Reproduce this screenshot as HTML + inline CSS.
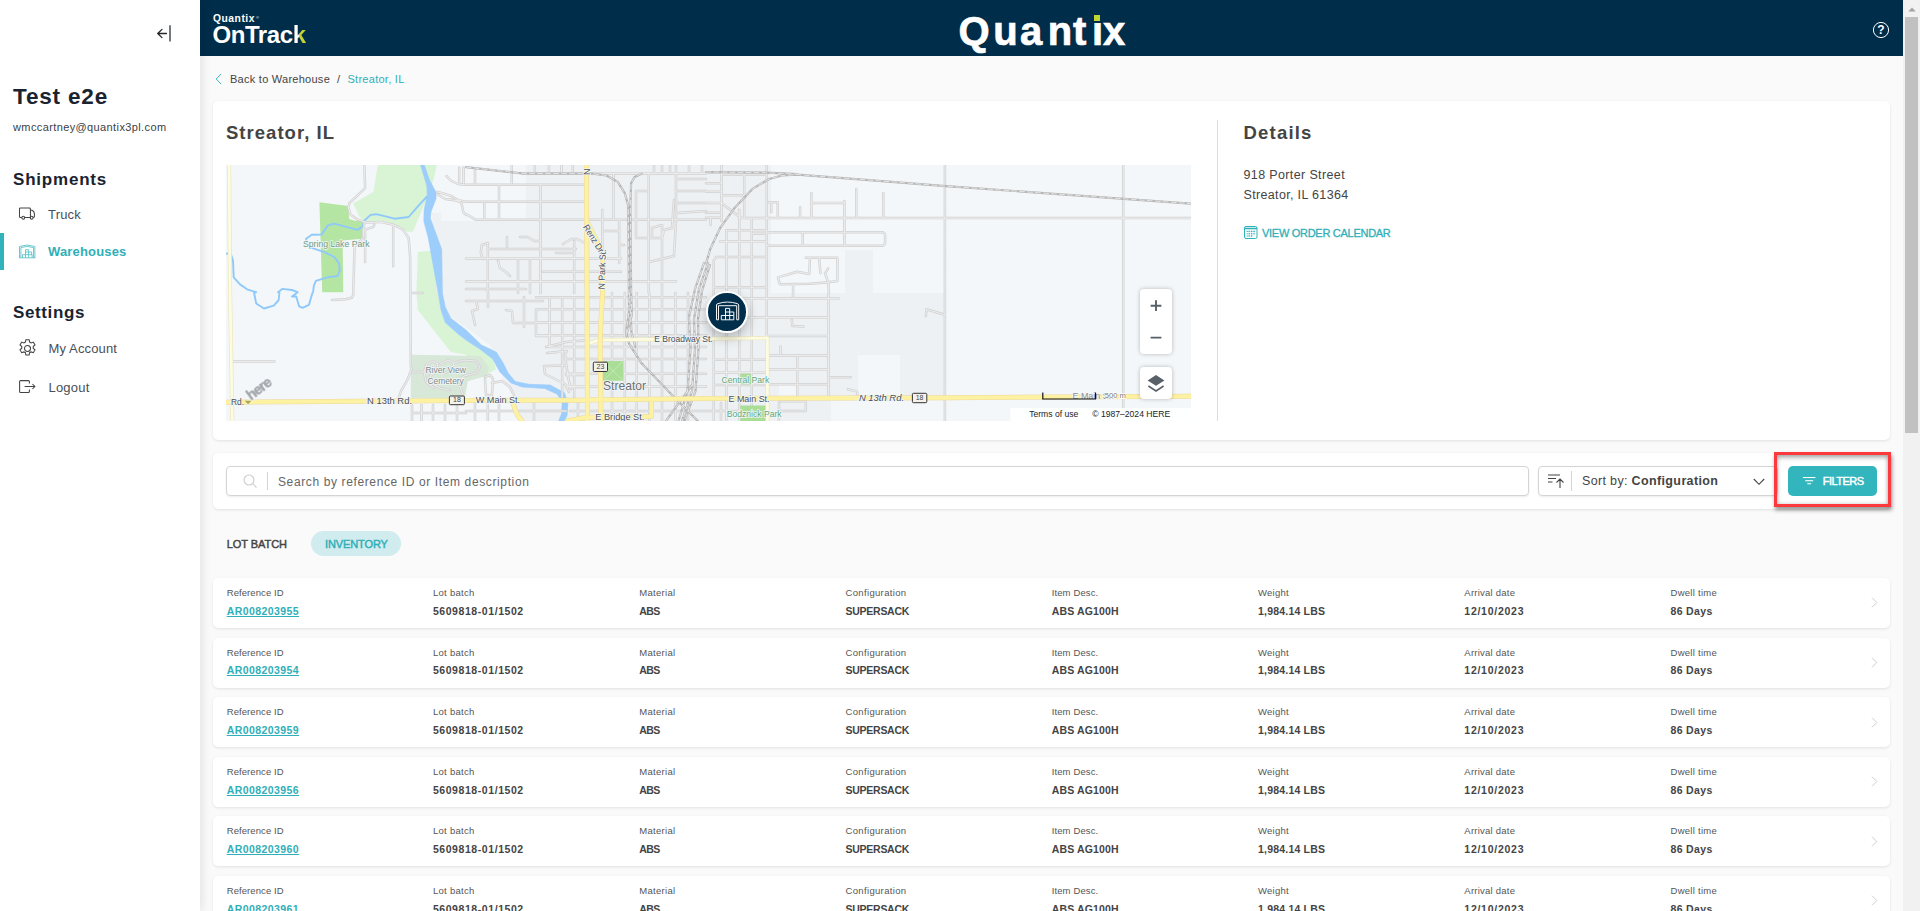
<!DOCTYPE html>
<html lang="en"><head><meta charset="utf-8"><title>Quantix OnTrack - Streator, IL</title>
<style>
*{box-sizing:border-box;margin:0;padding:0}
html,body{width:1920px;height:911px;overflow:hidden;background:#fafafa;font-family:"Liberation Sans",sans-serif;color:#444}
.abs{position:absolute}
.t{position:absolute;white-space:pre;line-height:1}
#side{position:absolute;left:0;top:0;width:200px;height:911px;background:#fff;box-shadow:2px 0 10px rgba(0,0,0,.10);z-index:5}
#hdr{position:absolute;left:200px;top:0;width:1703px;height:56px;background:#002d4a;z-index:4}
#sb{position:absolute;left:1903px;top:0;width:17px;height:911px;background:#f1f1f1;z-index:6}
#sb .th{position:absolute;left:2px;top:17px;width:13px;height:416px;background:#c1c1c1}
.card{position:absolute;background:#fff;border-radius:5px;box-shadow:0 1px 3px rgba(0,0,0,.10)}
.h{font-weight:700;color:#1a2330}
.lbl{font-size:9.5px;color:#555;letter-spacing:.09px}
.val{font-size:10.5px;font-weight:700;color:#444;letter-spacing:.4px}
.teal{color:#30afb8}
</style></head>
<body>
<div id="side"><svg class="abs" style="left:156px;top:25px" width="16" height="18" viewBox="0 0 16 18" fill="none" stroke-linecap="round" stroke-linejoin="round"><path d="M1.700 8.500h8.800M6 4.400 1.700 8.500 6 12.600" stroke="#23272c" stroke-width="1.300"/><path d="M14 .3v16.200" stroke="#666b70" stroke-width="1.800" stroke-linecap="butt"/></svg><div class="t h" style="left:13px;top:85.85px;font-size:22.5px;letter-spacing:.83px">Test e2e</div><div class="t " style="left:13px;top:122.19px;font-size:11px;letter-spacing:.386px;color:#3b3f46">wmccartney@quantix3pl.com</div><div class="t h" style="left:13px;top:170.61px;font-size:17px;letter-spacing:.79px">Shipments</div><div class="t " style="left:48px;top:207.70px;font-size:13px;letter-spacing:.19px;color:#4a4f57">Truck</div><div class="abs" style="left:0;top:233px;width:4px;height:37px;background:#30b3bb"></div><div class="t teal" style="left:48px;top:244.70px;font-size:13px;letter-spacing:.167px;font-weight:700">Warehouses</div><div class="t h" style="left:13px;top:303.91px;font-size:17px;letter-spacing:.62px">Settings</div><div class="t " style="left:48.5px;top:342.00px;font-size:13px;letter-spacing:.13px;color:#4a4f57">My Account</div><div class="t " style="left:48.5px;top:381.00px;font-size:13px;letter-spacing:.2px;color:#4a4f57">Logout</div><svg class="abs" style="left:19px;top:207.300px" width="16.200" height="13.400" viewBox="0 0 17 14" preserveAspectRatio="none" fill="none" stroke="#444" stroke-width="1.1"><path d="M3 11H1.500a1 1 0 0 1-1-1V2a1 1 0 0 1 1-1H11a1 1 0 0 1 1 1v9H6"/><path d="M12 3.500h1.600c1.600.6 2.600 2.400 2.600 4.200V10a1 1 0 0 1-1 1h-.6M12 11h.2"/><circle cx="4.500" cy="11.200" r="1.500"/><circle cx="13.300" cy="11.200" r="1.500"/></svg><svg class="abs" style="left:19px;top:244px" width="17" height="15" viewBox="0 0 17 15" fill="none" stroke="#5cc3ca" stroke-width=".9"><path d="M.5 13.800V2.500Q8.200 -.5 15.900 2.500V13.800M1.900 13.800V3.600Q8.200 1.100 14.500 3.600V13.800M0 13.800h16.400"/><path d="M3.500 13.800v-3.100h9.600v3.100M6.500 13.800V5.700h3.100v8.100M6.500 8h6.100v2.700"/></svg><svg class="abs" style="left:16.800px;top:338.300px" width="21" height="21" viewBox="0 0 18 18" fill="none" stroke="#444" stroke-width=".92"><circle cx="9" cy="9" r="2.600"/><path d="M7.600 1.500h2.800l.4 2 1.300.7 1.900-.7 1.400 2.400-1.500 1.400v1.500l1.500 1.400-1.400 2.400-1.900-.7-1.300.7-.4 2H7.600l-.4-2-1.300-.7-1.900.7-1.400-2.400 1.500-1.400V7.300L2.600 5.900 4 3.500l1.900.7 1.300-.7z"/></svg><svg class="abs" style="left:18.600px;top:380.400px" width="17" height="13" viewBox="0 0 17 13" fill="none" stroke="#444" stroke-width="1.05"><path d="M10.400 3.600V1.600a1 1 0 0 0-1-1H1.600a1 1 0 0 0-1 1v9.800a1 1 0 0 0 1 1h7.800a1 1 0 0 0 1-1v-2"/><path d="M5.600 6.500h10.300M13.400 4 15.900 6.500 13.400 9"/></svg></div>
<div id="hdr"><div class="t " style="left:13px;top:14.48px;font-size:10.3px;font-weight:700;color:#fff;letter-spacing:.52px">Quantix</div><div class="t " style="left:56px;top:15.61px;font-size:4px;color:#fff">®</div><div class="t " style="left:12.5px;top:23.28px;font-size:24px;font-weight:700;color:#fff;letter-spacing:-.43px">OnTrac<span style="background:linear-gradient(90deg,#fff 0,#fff 46%,#c3d531 46%);-webkit-background-clip:text;background-clip:text;color:transparent">k</span></div><div class="t " style="left:758.5px;top:10.64px;font-size:40px;font-weight:700;color:#fff;-webkit-text-stroke:.7px #fff"><span style="letter-spacing:3.54px">Q</span><span style="letter-spacing:2.44px">u</span><span style="letter-spacing:5.34px">a</span><span style="letter-spacing:0.84px">n</span><span style="letter-spacing:5.64px">t</span><span style="letter-spacing:-0.06px">i</span><span style="letter-spacing:0px">x</span></div><div class="abs" style="left:892px;top:12px;width:10px;height:10.500px;background:#002d4a"></div><div class="abs" style="left:894.200px;top:15.200px;width:5.800px;height:5.700px;background:#c3d531"></div><svg class="abs" style="left:1672px;top:21px" width="18" height="18" viewBox="0 0 18 18" fill="none" stroke="#fff" stroke-width="1"><circle cx="9" cy="9" r="7.600"/></svg><div class="t " style="left:1677.3px;top:23.54px;font-size:12px;font-weight:700;color:#fff">?</div></div>
<div id="sb"><div class="th"></div><svg class="abs" style="left:4.500px;top:6.500px" width="8" height="5" viewBox="0 0 8 5"><path d="M.3 4.600 4 .6 7.700 4.600z" fill="#a3a3a3"/></svg></div>
<svg class="abs" style="left:215px;top:73px" width="7" height="12" viewBox="0 0 7 12" fill="none" stroke="#3fb6bd" stroke-width="1"><path d="M6 1 1.200 6 6 11"/></svg>
<div class="t " style="left:230px;top:73.79px;font-size:11px;letter-spacing:.26px;color:#444">Back to Warehouse</div>
<div class="t " style="left:337px;top:73.79px;font-size:11px;color:#444">/</div>
<div class="t teal" style="left:347.5px;top:73.79px;font-size:11px;letter-spacing:.27px">Streator, IL</div>
<div class="card" style="left:213px;top:100.500px;width:1677px;height:339.500px"><div class="t " style="left:13px;top:23.44px;font-size:18.5px;font-weight:700;letter-spacing:1.03px;color:#444">Streator, IL</div><div class="abs" id="map" style="left:13px;top:64.5px;width:965px;height:256px;overflow:hidden;background:#f3f7fa"><svg width="965" height="256" viewBox="0 0 965 256" style="position:absolute;left:0;top:0;font-family:'Liberation Sans',sans-serif">
<rect width="965" height="256" fill="#f3f7fa"/>
<path fill="#edf1f4" d="M206 48h9v8h25l60 0V0h245v128h60v128H296l-8-22-15-28-8-25-55-40z"/>
<path fill="#edf1f4" d="M605 128h115v105H605zM619 85h28v43h-28z"/>
<path fill="#f3f7fa" d="M632 190h42v42h-42zM553 220h20v12h-20zM240 168l30 18v30h-30z"/>
<path fill="#d9f4d5" d="M151.700 0h59.100l-3.100 14-5.400 16.200-15.400 36.500h-5.600l-14.100-7.700-18.300-2.800-9.800.7-5.600-4.900-6.300-13.400 20.300-11.900z"/>
<path fill="#d9f4d5" d="M191.8 87.1L206.5 85.4L210.8 127L212.2 128L215 144.9L219.2 157.5L231.8 168.7L240 175.1L254.1 184.2L266.7 194L270.2 203.9L256.9 212.3L240 215L240 189.8L224.8 187L191.8 144.9L190.4 128z"/>
<path fill="#b5e5a3" d="M93.400 37.200l28.800 3.800 1 13.100 5.400 1.700 8.400-.3-1 18.300-19.400 1.700.7 51.700H96.200z"/>
<path fill="#d7e7d8" d="M184.800 189.800L254.400 191L262.800 202.200L261.400 210.600L241.700 216.200L238.900 233H184.800z"/>
<path fill="#9ccdfb" stroke="#9ccdfb" stroke-width=".6" stroke-linejoin="round" d="M198.4 0L203 14L210 27.4L210 33.7L205.1 46.4L204.4 53.4L215.7 84.3L216.4 128L219.2 142L224.8 153.3L240 165L255.5 180L270.2 187L276.5 196.8L282.2 208.1L289.2 216.5L303.2 219.3L324.3 220L338.4 227.8L341.9 237.6L341.2 250.2L338.4 256L332.7 256L335.5 248.8L336.2 237.6L331.3 229.2L318.7 223.5L296.2 222.1L285 217.9L273.7 206.7L266.7 194L254.1 184.2L240 175.1L231.8 168.7L219.2 157.5L215 144.9L212.2 128L202.3 73L197.8 56.2L198.1 45L201.2 30.2L200.9 21.1L194.6 0z"/>
<path fill="none" stroke="#8fc9fb" stroke-width="1.900" stroke-linejoin="round" stroke-linecap="round" d="M200.900 31.600l-8.400 9.100-9.800 11.300-14.100 1.700-18.300-4.500-5.600.7-6.300 5.600-2.100 6.300-4.900 3.100-23.200-6.200-6.300 1.700-6.400 9.200-9.800.2-5.600 4 .7 4.900 4.900 4.200 12.700 4.200 9.800 4.900 4.900 6.400.7 7-2.100 5.600-10.500 1.400-11.300 3.500-2.100 4.900-.7 6.400M0 88.500l4.900.7 2.100 6.300.7 16.900 6.300 7 7.100 4.900 9.100 2.900 -2.100.8 2.100 10.500 7.700 5 9.900-2.900 4.900-5.600.7-7M52 127.200l4.200-3.300 9.800 1.100 5.700 2.200-5.700 4.300h4.200l2.900 9.800 3.500 1.500 6.300-2.900 3.500-11.900"/>
<path fill="none" stroke="#d0d0d0" stroke-width="2.5" stroke-linecap="round" stroke-linejoin="round"  d="M138.400 0l.7 23.200-15.500 14.700-1.400 4.300 2.100 7 6.400 4.900 9.800 3.500 14.100-.7 12.600 2.800 9.800 4.900 5.700 8.500 1.400 18.200.7 110 .7 2.600-3.500 9.800-7.100 12.700-2.100 6.300M138.400 57.600l-1.400 15.500-8.400 8.400-1.400 45.700v3l-1.400 2.600-6.400 1.500-13.400.7M139.100 64.600v32.400M139.100 64.600l8.400-2.800.7-2.100M167.200 59.700v41.500M7 196.600h41.500M184.100 128h12.600M220.600 11.200l4.200 4.300 7 3.500 8.200.7M233.200 2.800v15.500M237.500 2.800v15.500M210.800 26.700l5.600 1.400 8.400 2.800 7 4.200 8.200 1.700M211 29l8.400 5 11 1.500 5 2.400 2.100 9.900 2.500 2.100M296 8.4H480M240 19.7H358M240 36.8H358M250 54.8H450M262 84H350M240 93.4H395M317 106.8H395M240 116.6H450M240 124H300M314.5 19.7V128M273 19.7V54.8M258.3 38V54.8M261.8 78V128M285.7 0V18.5M249 5V18.5M308.8 0V8.4M322.9 0V8.4M335.5 0V8.4M346.8 0V8.4M348.2 76V128M376.3 45V84M387.5 8.4V54.8M393.2 54.8V98M422.7 8.4V128M450 0V56M410 26V73M292 94V128M304 94V128M436 60V128M240 49l10 5.800M261.800 78l-6 2 -1 8 2 6M281 72v10M294 72h8l6 4h6M337 79l8-5 6 0 8 4M330 88h18M272 96l2 7 6 4 4 4M410 26h12M410 73h26l2-8 8-2 2 -28M436 60l-10 3v10M450 56l-2 35-25 6M376.300 66h17M393.200 80h5M436 8.400V0M428 0v8.400M444 0v8.400M463 0v8.400M476 0v8.400M450 14h30M450 26h30M450 38h30M450 48l30-2M450 54.800h30M395 8.400l10 0 45 .3M323.6 132.2V182.1M336.2 132.2V232M348.2 132.2V232M386.1 128V256M398.8 128V256M410.7 128V256M423.4 128V256M436 128V256M449.4 128V256M462 128V256M310 132.2H480M310 144.2H480M310 157.5H480M310 170.2H480M323.6 182.1H480M340 194H480M340 208.8H480M340 221.4H480M240 136h77M262 128v14M250 136l2 8-6 2 3 14M280 145l6 1 1 12h23M298 132v30M310 145v26M310 171h14M320 182l20-5 22-2M321 188l20-2-2 4 3 22 3 12M318 201l22-.5M318 201l1 8 20 10 4 8M340 210h20M340 222h20M249 238V256M261.8 238V256M273 238V256M308 238V256M352 238V256M386 238V256M398.8 238V256M410.7 238V256M436 238V256M449.4 238V256M240 246h100M344 246h136M259 212l5-2 3 4-1 16h-6l-1-16M266 218l10-2 8 6 4 8 1 6M186 240V256M195.500 240V256M207 240V256M219 240V256M231 240V256M186 248H240M186 207h12l3-8 6-3 5 3-2 8 -6 4 2 8 8 4 10 2M198 207l2 10 8 6M214 199l8-4 6 3-2 7-8 3M228 198l10-3 12 1 4 6-4 6-12 3-6 8M236 212l-2 10 3 8M540.700 0V175M513.700 53.100H964.500M718.900 0V256M897.200 0V256M495.500 0V56M480 7.700h15.500M480 18.300h15.500M480 26.700h15.500M480 37.900h15.500M480 47.800h15.500M480 52.700h15.500l0 0M484.500 53v7M518.200 10v43M495.500 9.800h45M495.500 30.200h22.700M495.500 37.900l18.200 14.100M513 45v8M542.500 37.200h9.200v15.900M545.300 38v9.300M574.100 42.200v10.900M585.400 28.100v25M585.400 37.900h33M618.400 36v45M630.300 23.900v29.200M657.300 28v25M541.100 67.200h115a3 3 0 0 1 3 3v7.600a3 3 0 0 1-3 3H541.100M576.700 67.200v13.600M500.4 65.3V256M513.3 45V256M525.7 53.1V256M487.7 97V256M500.4 65.3H540.7M525.7 68.8H540.7M494 76.6H540.7M490 92H540.7M487.7 122.2H540.7M513 133.6H540.7M513 152.6H540.7M487.700 97a5 5 0 0 1 5-5M579.800 92.700h31.600v23.200l-9.200 1.400-18.200 1.400-30.200.5-1.900-6.800 19.400-5.600 12 2.100.7-16.200M593.100 92.700l1.400 15.500M599.400 108.200l2.800-4.900M599 108l3.200 9.300.7 10.700M567.100 119.200v9M602.500 128V231M541.400 133.6H602.500M541.400 152.6H602.500M541.400 170.9H602.500M541.400 190.5H602.500M541.400 204.6H602.500M541.400 219.3H602.500M602.500 133.600h10M571.300 190.500V232M567 128v5.600M565.700 154.700l.7 6.300 11.300.4M554.500 181.400v8.400M603.600 212.300h21.100M621.900 224.200l9.100 2.200.8 4.900M699.900 151.200l.7-7 18.300 5.600M487.700 194.7H540.7M487.700 207.4H540.7M487.700 220H540.7M553 237V256M554.500 236.200h25.300V246h-25.300M480 246h34M495 238v18"/>
<path fill="none" stroke="#ececec" stroke-width="1.1" stroke-linecap="round" stroke-linejoin="round"  d="M138.400 0l.7 23.200-15.500 14.700-1.400 4.300 2.100 7 6.400 4.900 9.800 3.500 14.100-.7 12.600 2.800 9.800 4.900 5.700 8.500 1.400 18.200.7 110 .7 2.600-3.500 9.800-7.100 12.700-2.100 6.300M138.400 57.600l-1.400 15.500-8.400 8.400-1.400 45.700v3l-1.400 2.600-6.400 1.500-13.400.7M139.100 64.600v32.400M139.100 64.600l8.400-2.800.7-2.100M167.200 59.700v41.500M7 196.600h41.500M184.100 128h12.600M220.600 11.200l4.200 4.300 7 3.500 8.200.7M233.200 2.800v15.500M237.500 2.800v15.500M210.800 26.700l5.600 1.400 8.400 2.800 7 4.200 8.200 1.700M211 29l8.400 5 11 1.500 5 2.400 2.100 9.900 2.500 2.100M296 8.4H480M240 19.7H358M240 36.8H358M250 54.8H450M262 84H350M240 93.4H395M317 106.8H395M240 116.6H450M240 124H300M314.5 19.7V128M273 19.7V54.8M258.3 38V54.8M261.8 78V128M285.7 0V18.5M249 5V18.5M308.8 0V8.4M322.9 0V8.4M335.5 0V8.4M346.8 0V8.4M348.2 76V128M376.3 45V84M387.5 8.4V54.8M393.2 54.8V98M422.7 8.4V128M450 0V56M410 26V73M292 94V128M304 94V128M436 60V128M240 49l10 5.800M261.800 78l-6 2 -1 8 2 6M281 72v10M294 72h8l6 4h6M337 79l8-5 6 0 8 4M330 88h18M272 96l2 7 6 4 4 4M410 26h12M410 73h26l2-8 8-2 2 -28M436 60l-10 3v10M450 56l-2 35-25 6M376.300 66h17M393.200 80h5M436 8.400V0M428 0v8.400M444 0v8.400M463 0v8.400M476 0v8.400M450 14h30M450 26h30M450 38h30M450 48l30-2M450 54.800h30M395 8.400l10 0 45 .3M323.6 132.2V182.1M336.2 132.2V232M348.2 132.2V232M386.1 128V256M398.8 128V256M410.7 128V256M423.4 128V256M436 128V256M449.4 128V256M462 128V256M310 132.2H480M310 144.2H480M310 157.5H480M310 170.2H480M323.6 182.1H480M340 194H480M340 208.8H480M340 221.4H480M240 136h77M262 128v14M250 136l2 8-6 2 3 14M280 145l6 1 1 12h23M298 132v30M310 145v26M310 171h14M320 182l20-5 22-2M321 188l20-2-2 4 3 22 3 12M318 201l22-.5M318 201l1 8 20 10 4 8M340 210h20M340 222h20M249 238V256M261.8 238V256M273 238V256M308 238V256M352 238V256M386 238V256M398.8 238V256M410.7 238V256M436 238V256M449.4 238V256M240 246h100M344 246h136M259 212l5-2 3 4-1 16h-6l-1-16M266 218l10-2 8 6 4 8 1 6M186 240V256M195.500 240V256M207 240V256M219 240V256M231 240V256M186 248H240M186 207h12l3-8 6-3 5 3-2 8 -6 4 2 8 8 4 10 2M198 207l2 10 8 6M214 199l8-4 6 3-2 7-8 3M228 198l10-3 12 1 4 6-4 6-12 3-6 8M236 212l-2 10 3 8M540.700 0V175M513.700 53.100H964.500M718.900 0V256M897.200 0V256M495.500 0V56M480 7.700h15.500M480 18.300h15.500M480 26.700h15.500M480 37.900h15.500M480 47.800h15.500M480 52.700h15.500l0 0M484.500 53v7M518.200 10v43M495.500 9.800h45M495.500 30.200h22.700M495.500 37.900l18.200 14.100M513 45v8M542.500 37.200h9.200v15.900M545.300 38v9.300M574.100 42.200v10.900M585.400 28.100v25M585.400 37.900h33M618.400 36v45M630.300 23.900v29.200M657.300 28v25M541.100 67.200h115a3 3 0 0 1 3 3v7.600a3 3 0 0 1-3 3H541.100M576.700 67.200v13.600M500.4 65.3V256M513.3 45V256M525.7 53.1V256M487.7 97V256M500.4 65.3H540.7M525.7 68.8H540.7M494 76.6H540.7M490 92H540.7M487.7 122.2H540.7M513 133.6H540.7M513 152.6H540.7M487.700 97a5 5 0 0 1 5-5M579.800 92.700h31.600v23.200l-9.200 1.400-18.200 1.400-30.200.5-1.900-6.800 19.400-5.600 12 2.100.7-16.200M593.100 92.700l1.400 15.500M599.400 108.200l2.800-4.900M599 108l3.200 9.300.7 10.700M567.100 119.200v9M602.500 128V231M541.400 133.6H602.500M541.400 152.6H602.500M541.400 170.9H602.500M541.400 190.5H602.500M541.400 204.6H602.500M541.400 219.3H602.500M602.500 133.600h10M571.300 190.500V232M567 128v5.600M565.700 154.700l.7 6.300 11.300.4M554.500 181.400v8.400M603.600 212.300h21.100M621.900 224.200l9.100 2.200.8 4.900M699.900 151.200l.7-7 18.300 5.600M487.700 194.7H540.7M487.700 207.4H540.7M487.700 220H540.7M553 237V256M554.500 236.200h25.300V246h-25.300M480 246h34M495 238v18"/>
<path fill="#aadd96" d="M377 196.100h20.400v19.700H377zM514.400 208.800H525v10.500h-10.600zM514.400 240.400h25.300V256h-25.300z"/>
<path d="M377 196.100l20.400 19.700M397.400 196.100L377 215.800" stroke="#c4e8b8" stroke-width="1" fill="none"/>
<path fill="none" stroke="#b4b4b4" stroke-width="2.2" stroke-linecap="round" stroke-linejoin="round"  d="M240 2.100l56.200 6.300 70.300.3 14 1.800 11.200 6.400 7.100 11.200 3.500 12.600.7 105.600-2.800 21 2.800 11.300 12.600 19.700 32.400 33.700 23.800 24M415.600 8.700l-7 3.200-3.500 6.400-.7 22.400.7 87.300.7 22-5.600 21M480 98.400l4.200-14.100 9.800-21.100 14.100-19.600 18.300-19.700 16.800-9.900 12.700-3.500 15.400-.9 49.200 3.700 99.500 7.800L964.500 38.600M480 7l60.400.7 30.900 1.400M482 98l-9 26-5 30 1 30-3 42-10 30M484 100l-8 26-4 28 .5 30-3 42-11 30M478 98l-9 26-6 28 1.500 32-3 42-9 30M403.500 128l2 40 4 14M440 256l26-36"/>
<path fill="none" stroke="#f0f0f0" stroke-width="0.8" stroke-linecap="round" stroke-linejoin="round" stroke-dasharray="5 3" d="M240 2.100l56.200 6.300 70.300.3 14 1.800 11.200 6.400 7.100 11.200 3.500 12.600.7 105.600-2.800 21 2.800 11.300 12.600 19.700 32.400 33.700 23.800 24M415.600 8.700l-7 3.200-3.500 6.400-.7 22.400.7 87.300.7 22-5.600 21M480 98.400l4.200-14.100 9.800-21.100 14.100-19.600 18.300-19.700 16.800-9.900 12.700-3.500 15.400-.9 49.200 3.700 99.500 7.800L964.500 38.600M480 7l60.400.7 30.900 1.400M482 98l-9 26-5 30 1 30-3 42-10 30M484 100l-8 26-4 28 .5 30-3 42-11 30M478 98l-9 26-6 28 1.500 32-3 42-9 30M403.500 128l2 40 4 14M440 256l26-36"/>
<path fill="none" stroke="#e9e5b8" stroke-width="4" stroke-linecap="round" stroke-linejoin="round"  d="M3.100 0l1 128 2.200 128M362.200 178.600l10.600-3.500 107.200-1.400 61.400-.7V256"/>
<path fill="none" stroke="#fdfbe2" stroke-width="2.8" stroke-linecap="round" stroke-linejoin="round"  d="M3.100 0l1 128 2.200 128M362.200 178.600l10.600-3.500 107.200-1.400 61.400-.7V256"/>
<path fill="none" stroke="#ecd8a0" stroke-width="5" stroke-linecap="round" stroke-linejoin="round"  d="M0 237.300L240 235.500l120-.5 120-1.600 240-.7 244.500-1.400M360.400 0l1.100 256M362.200 59l12.700 25.300 1.700 7v36.700l-1.700 28.100-.7 19.700.7 80.200M286.400 236.900l4.900 13.300 4.900 5.800M341.200 256l19.600-3.700 64.700-.7v-14.700"/>
<path fill="none" stroke="#fdf1a2" stroke-width="4" stroke-linecap="round" stroke-linejoin="round"  d="M0 237.300L240 235.500l120-.5 120-1.600 240-.7 244.500-1.400M360.400 0l1.100 256M362.200 59l12.700 25.300 1.700 7v36.700l-1.700 28.100-.7 19.700.7 80.200M286.400 236.900l4.900 13.300 4.900 5.800M341.200 256l19.600-3.700 64.700-.7v-14.700"/>
<text x="77" y="82.3" font-size="9" fill="#6e9c86" style="paint-order:stroke;stroke:#f3f7fa;stroke-width:1.6px;stroke-linejoin:round" textLength="66.5" lengthAdjust="spacingAndGlyphs" >Spring Lake Park</text>
<text x="199.4" y="208.3" font-size="9" fill="#7d8a88" style="paint-order:stroke;stroke:#f3f7fa;stroke-width:1.6px;stroke-linejoin:round" textLength="40.5" lengthAdjust="spacingAndGlyphs" >River View</text>
<text x="201.5" y="219" font-size="9" fill="#7d8a88" style="paint-order:stroke;stroke:#f3f7fa;stroke-width:1.6px;stroke-linejoin:round" textLength="36.3" lengthAdjust="spacingAndGlyphs" >Cemetery</text>
<text x="495.5" y="217.6" font-size="9" fill="#5fa777" style="paint-order:stroke;stroke:#f3f7fa;stroke-width:1.6px;stroke-linejoin:round" textLength="47.7" lengthAdjust="spacingAndGlyphs" >Central Park</text>
<text x="500.8" y="251.9" font-size="9" fill="#5fa777" style="paint-order:stroke;stroke:#f3f7fa;stroke-width:1.6px;stroke-linejoin:round" textLength="54.8" lengthAdjust="spacingAndGlyphs" >Bodznick Park</text>
<text x="377" y="225" font-size="13.5" fill="#6b6f73" style="paint-order:stroke;stroke:#f3f7fa;stroke-width:1.6px;stroke-linejoin:round" textLength="43" lengthAdjust="spacingAndGlyphs" >Streator</text>
<text x="5" y="239.8" font-size="9" fill="#4a4f55" style="paint-order:stroke;stroke:#f3f7fa;stroke-width:1.6px;stroke-linejoin:round" textLength="13" lengthAdjust="spacingAndGlyphs" >Rd.</text>
<text x="141" y="239" font-size="9" fill="#4a4f55" style="paint-order:stroke;stroke:#f3f7fa;stroke-width:1.6px;stroke-linejoin:round" textLength="45" lengthAdjust="spacingAndGlyphs" >N 13th Rd.</text>
<text x="249.8" y="237.9" font-size="9" fill="#4a4f55" style="paint-order:stroke;stroke:#f3f7fa;stroke-width:1.6px;stroke-linejoin:round" textLength="44.3" lengthAdjust="spacingAndGlyphs" >W Main St.</text>
<text x="428.3" y="177.2" font-size="9" fill="#4a4f55" style="paint-order:stroke;stroke:#f3f7fa;stroke-width:1.6px;stroke-linejoin:round" textLength="58.4" lengthAdjust="spacingAndGlyphs" >E Broadway St.</text>
<text x="369.3" y="255.2" font-size="9" fill="#4a4f55" style="paint-order:stroke;stroke:#f3f7fa;stroke-width:1.6px;stroke-linejoin:round" textLength="49" lengthAdjust="spacingAndGlyphs" >E Bridge St.</text>
<text x="502.5" y="236.5" font-size="9" fill="#4a4f55" style="paint-order:stroke;stroke:#f3f7fa;stroke-width:1.6px;stroke-linejoin:round" textLength="41" lengthAdjust="spacingAndGlyphs" >E Main St.</text>
<text x="632.9" y="236.3" font-size="9" fill="#4a4f55" style="paint-order:stroke;stroke:#f3f7fa;stroke-width:1.6px;stroke-linejoin:round" textLength="45.2" lengthAdjust="spacingAndGlyphs" font-style="italic">N 13th Rd.</text>
<text x="846.5" y="234" font-size="9" fill="#8a8d90" style="paint-order:stroke;stroke:#f3f7fa;stroke-width:1.6px;stroke-linejoin:round" textLength="41" lengthAdjust="spacingAndGlyphs" >E Main St.</text>
<text x="0" y="0" font-size="9" fill="#4a4f55" style="paint-order:stroke;stroke:#f3f7fa;stroke-width:1.6px;stroke-linejoin:round" textLength="40" lengthAdjust="spacingAndGlyphs" transform="translate(378.4 124.5) rotate(-88)">N Park St.</text>
<text x="0" y="0" font-size="9" fill="#4a4f55" style="paint-order:stroke;stroke:#f3f7fa;stroke-width:1.6px;stroke-linejoin:round" textLength="33" lengthAdjust="spacingAndGlyphs" transform="translate(356.8 62) rotate(58)">Renz Dr.</text>
<text x="0" y="0" font-size="9" fill="#4a4f55" style="paint-order:stroke;stroke:#f3f7fa;stroke-width:1.6px;stroke-linejoin:round" transform="translate(364 10) rotate(-90)">N</text>
<rect x="223.4" y="231" width="15" height="8.7" rx="1" fill="#f4f2ea" stroke="#333" stroke-width="1"/><text x="230.9" y="237.39999999999998" font-size="7" fill="#444" text-anchor="middle">18</text>
<rect x="367.3" y="197.2" width="14.2" height="9.3" rx="1" fill="#f4f2ea" stroke="#333" stroke-width="1"/><text x="374.40000000000003" y="204.2" font-size="7" fill="#444" text-anchor="middle">23</text>
<rect x="686.4" y="228.3" width="14.4" height="9.4" rx="1" fill="#f4f2ea" stroke="#333" stroke-width="1"/><text x="693.6" y="235.4" font-size="7" fill="#444" text-anchor="middle">18</text>
<text font-size="14.5" font-weight="700" fill="#a4a8af" stroke="#a4a8af" stroke-width=".55" style="filter:drop-shadow(0 0 .7px #fff) drop-shadow(0 0 .7px #fff) drop-shadow(0 0 .9px #fff)" transform="translate(25 235.8) rotate(-37)" letter-spacing="-.9">here</text>
<path d="M18.700 235.800h6.700l-3.300 3.400z" fill="#a8a463"/>
<path d="M816.800 227.500v6.500h52.700v-6.500" fill="none" stroke="#111" stroke-width="1.200"/>
<text x="878.800" y="233.400" font-size="7.600" fill="#777" style="paint-order:stroke;stroke:#fff;stroke-width:1.500px">500 m</text>
<rect x="784.400" y="243" width="181" height="13" fill="#fff" fill-opacity=".92"/>
<text x="803.200" y="252" font-size="8.600" fill="#222" font-family="'Liberation Sans',sans-serif">Terms of use</text>
<text x="866.200" y="252" font-size="8.600" fill="#222" font-family="'Liberation Sans',sans-serif">© 1987–2024 HERE</text>
</svg>
<div style="position:absolute;left:480.400px;top:126.300px;width:41.400px;height:41.400px;border-radius:50%;background:#012e4b;border:2.200px solid #fff;box-shadow:0 5px 12px rgba(0,0,0,.25)"></div>
<svg style="position:absolute;left:490.100px;top:135px" width="24" height="21" viewBox="0 0 24 21" fill="none" stroke="#fff" stroke-width=".95"><path d="M.5 19.800V5Q.5 4 2 3.600Q11.600 .500 21.200 3.600Q22.700 4 22.700 5V19.800M2.500 19.800V5.700H20.700V19.800M.5 19.800H2.500M20.700 19.800H22.700"/><path d="M5.300 15.500H17.800V19.800H5.300zM9.500 19.800V8.400H13.700V19.800M9.500 12H17.800V15.500"/></svg>
<div style="position:absolute;left:913.600px;top:124.400px;width:32.600px;height:64.700px;border-radius:4px;background:#fff;box-shadow:0 0 4px rgba(0,0,0,.25)"></div>
<svg style="position:absolute;left:913.600px;top:124.400px" width="33" height="65" viewBox="0 0 33 65" stroke="#586068" stroke-width="1.900" fill="none"><path d="M10.600 16.700h10.800M16 11.300v10.800M10.600 48.600h10.800"/></svg>
<div style="position:absolute;left:913.600px;top:201.800px;width:32.600px;height:32.300px;border-radius:4px;background:#fff;box-shadow:0 0 4px rgba(0,0,0,.25)"></div>
<svg style="position:absolute;left:913.600px;top:201.800px" width="33" height="33" viewBox="0 0 33 33"><path d="M16 8l8.400 5.400L16 18.800 7.600 13.400z" fill="#5a6068"/><path d="M8.400 19l7.600 5 7.600-5" fill="none" stroke="#5a6068" stroke-width="1.500"/></svg></div><div class="abs" style="left:1004px;top:19.5px;width:1px;height:300.5px;background:#dcdcdc"></div><div class="t " style="left:1030.5px;top:23.54px;font-size:18.5px;font-weight:700;letter-spacing:1.2px;color:#444">Details</div><div class="t " style="left:1030.5px;top:68.92px;font-size:12.5px;letter-spacing:.37px;color:#444">918 Porter Street</div><div class="t " style="left:1030.5px;top:88.02px;font-size:12.5px;letter-spacing:.338px;color:#444">Streator, IL 61364</div><svg class="abs" style="left:1030.5px;top:125.300px" width="14" height="13" viewBox="0 0 14 13" fill="none" stroke="#30b3bb" stroke-width="1"><rect x=".5" y=".5" width="12.500" height="12" rx="1.500"/><path d="M.5 2.500h12.500" stroke-width="1.600"/><path d="M2.500 5.500h8.500M2.500 7.800h8.500M2.500 10h6M5 4.500v6.500M7.500 4.500v6.500M10 4.500v4" stroke-width=".8" stroke-dasharray="1.5 .8"/></svg><div class="t teal" style="left:1049px;top:127.09px;font-size:11px;letter-spacing:-.28px;-webkit-text-stroke:.3px #30afb8">VIEW ORDER CALENDAR</div></div>
<div class="card" style="left:213px;top:453px;width:1677px;height:56px"><div class="abs" style="left:13px;top:13px;width:1302.500px;height:29.500px;border:1px solid #d4d4d4;border-radius:4px;box-shadow:0 1px 2px rgba(0,0,0,.08)"></div><svg class="abs" style="left:29.500px;top:20.500px" width="15" height="15" viewBox="0 0 15 15" fill="none" stroke="#cfcfcf" stroke-width="1.2"><circle cx="6" cy="6" r="5"/><path d="M9.700 9.700 13.500 13.500"/></svg><div class="abs" style="left:54px;top:19px;width:1px;height:18px;background:#d4d4d4"></div><div class="t " style="left:65px;top:23.44px;font-size:12px;letter-spacing:.62px;color:#666">Search by reference ID or Item description</div><div class="abs" style="left:1325px;top:13px;width:239.500px;height:29.500px;border:1px solid #d4d4d4;border-radius:4px;box-shadow:0 1px 2px rgba(0,0,0,.08)"></div><svg class="abs" style="left:1334.500px;top:20.500px" width="17" height="15" viewBox="0 0 17 15" fill="none" stroke="#444" stroke-width="1.1"><path d="M0 1h12M0 4.500h8M0 8h4.500M12 14V5M8.500 8.500 12 5l3.500 3.500"/></svg><div class="abs" style="left:1358px;top:18px;width:1px;height:19.500px;background:#d4d4d4"></div><div class="t " style="left:1369px;top:22.02px;font-size:12.5px;letter-spacing:.34px;color:#444">Sort by: <b style="letter-spacing:.366px">Configuration</b></div><svg class="abs" style="left:1540px;top:24.500px" width="12" height="8" viewBox="0 0 12 8" fill="none" stroke="#444" stroke-width="1.1"><path d="M.8 1 6 6.300 11.200 1"/></svg><div class="abs" style="left:1575px;top:13px;width:89px;height:30px;border-radius:5px;background:#33b5bd"></div><svg class="abs" style="left:1589.800px;top:24px" width="13" height="9" viewBox="0 0 13 9" fill="#fff"><rect x="0" y="0" width="12.400" height="1.050"/><rect x="2.200" y="3.200" width="8" height="1.100"/><rect x="4.300" y="6.200" width="3.800" height="1.050"/></svg><div class="t " style="left:1609.8px;top:22.69px;font-size:11px;letter-spacing:-.52px;color:#fff;-webkit-text-stroke:.45px #fff">FILTERS</div></div>
<div class="abs" style="left:1774px;top:452px;width:117px;height:55px;border:3px solid #fc3a3d;box-shadow:1px 3px 4px rgba(0,0,0,.42),inset 0 3px 4px rgba(0,0,0,.26),inset 0 0 4px rgba(0,0,0,.2);z-index:3"></div>
<div class="t " style="left:226.7px;top:538.99px;font-size:11px;letter-spacing:-.05px;color:#444;-webkit-text-stroke:.45px #444">LOT BATCH</div>
<div class="abs" style="left:311px;top:531px;width:90px;height:25px;border-radius:13px;background:#d1ecee"></div>
<div class="t teal" style="left:325px;top:538.99px;font-size:11px;letter-spacing:-.11px;-webkit-text-stroke:.45px #30afb8">INVENTORY</div>
<div class="card" style="left:213px;top:577.90px;width:1677px;height:50px;border-radius:5px"><div class="t lbl" style="left:13.699999999999989px;top:10.16px;font-size:9.5px;letter-spacing:0.09px">Reference ID</div><div class="t val teal" style="left:13.699999999999989px;top:27.91px;font-size:10.5px;letter-spacing:0.43px;text-decoration:underline;text-decoration-thickness:1.300px;text-underline-offset:1.200px">AR008203955</div><div class="t lbl" style="left:219.89999999999998px;top:10.16px;font-size:9.5px;letter-spacing:0.29px">Lot batch</div><div class="t val" style="left:219.89999999999998px;top:27.91px;font-size:10.5px;letter-spacing:0.57px">5609818-01/1502</div><div class="t lbl" style="left:426.20000000000005px;top:10.16px;font-size:9.5px;letter-spacing:0.31px">Material</div><div class="t val" style="left:426.20000000000005px;top:27.91px;font-size:10.5px;letter-spacing:-0.52px">ABS</div><div class="t lbl" style="left:632.5px;top:10.16px;font-size:9.5px;letter-spacing:0.34px">Configuration</div><div class="t val" style="left:632.5px;top:27.91px;font-size:10.5px;letter-spacing:-0.26px">SUPERSACK</div><div class="t lbl" style="left:838.7px;top:10.16px;font-size:9.5px;letter-spacing:0.12px">Item Desc.</div><div class="t val" style="left:838.7px;top:27.91px;font-size:10.5px;letter-spacing:0.16px">ABS AG100H</div><div class="t lbl" style="left:1045px;top:10.16px;font-size:9.5px;letter-spacing:0.25px">Weight</div><div class="t val" style="left:1045px;top:27.91px;font-size:10.5px;letter-spacing:0.2px">1,984.14 LBS</div><div class="t lbl" style="left:1251.3px;top:10.16px;font-size:9.5px;letter-spacing:0.245px">Arrival date</div><div class="t val" style="left:1251.3px;top:27.91px;font-size:10.5px;letter-spacing:0.74px">12/10/2023</div><div class="t lbl" style="left:1457.5px;top:10.16px;font-size:9.5px;letter-spacing:0.28px">Dwell time</div><div class="t val" style="left:1457.5px;top:27.91px;font-size:10.5px;letter-spacing:0.34px">86 Days</div><svg class="abs" style="left:1658px;top:19.500px" width="7" height="11" viewBox="0 0 7 11" fill="none" stroke="#cfcfcf" stroke-width="1"><path d="M1 .7 5.800 5.500 1 10.300"/></svg></div>
<div class="card" style="left:213px;top:637.50px;width:1677px;height:50px;border-radius:5px"><div class="t lbl" style="left:13.699999999999989px;top:10.16px;font-size:9.5px;letter-spacing:0.09px">Reference ID</div><div class="t val teal" style="left:13.699999999999989px;top:27.91px;font-size:10.5px;letter-spacing:0.43px;text-decoration:underline;text-decoration-thickness:1.300px;text-underline-offset:1.200px">AR008203954</div><div class="t lbl" style="left:219.89999999999998px;top:10.16px;font-size:9.5px;letter-spacing:0.29px">Lot batch</div><div class="t val" style="left:219.89999999999998px;top:27.91px;font-size:10.5px;letter-spacing:0.57px">5609818-01/1502</div><div class="t lbl" style="left:426.20000000000005px;top:10.16px;font-size:9.5px;letter-spacing:0.31px">Material</div><div class="t val" style="left:426.20000000000005px;top:27.91px;font-size:10.5px;letter-spacing:-0.52px">ABS</div><div class="t lbl" style="left:632.5px;top:10.16px;font-size:9.5px;letter-spacing:0.34px">Configuration</div><div class="t val" style="left:632.5px;top:27.91px;font-size:10.5px;letter-spacing:-0.26px">SUPERSACK</div><div class="t lbl" style="left:838.7px;top:10.16px;font-size:9.5px;letter-spacing:0.12px">Item Desc.</div><div class="t val" style="left:838.7px;top:27.91px;font-size:10.5px;letter-spacing:0.16px">ABS AG100H</div><div class="t lbl" style="left:1045px;top:10.16px;font-size:9.5px;letter-spacing:0.25px">Weight</div><div class="t val" style="left:1045px;top:27.91px;font-size:10.5px;letter-spacing:0.2px">1,984.14 LBS</div><div class="t lbl" style="left:1251.3px;top:10.16px;font-size:9.5px;letter-spacing:0.245px">Arrival date</div><div class="t val" style="left:1251.3px;top:27.91px;font-size:10.5px;letter-spacing:0.74px">12/10/2023</div><div class="t lbl" style="left:1457.5px;top:10.16px;font-size:9.5px;letter-spacing:0.28px">Dwell time</div><div class="t val" style="left:1457.5px;top:27.91px;font-size:10.5px;letter-spacing:0.34px">86 Days</div><svg class="abs" style="left:1658px;top:19.500px" width="7" height="11" viewBox="0 0 7 11" fill="none" stroke="#cfcfcf" stroke-width="1"><path d="M1 .7 5.800 5.500 1 10.300"/></svg></div>
<div class="card" style="left:213px;top:697.10px;width:1677px;height:50px;border-radius:5px"><div class="t lbl" style="left:13.699999999999989px;top:10.16px;font-size:9.5px;letter-spacing:0.09px">Reference ID</div><div class="t val teal" style="left:13.699999999999989px;top:27.91px;font-size:10.5px;letter-spacing:0.43px;text-decoration:underline;text-decoration-thickness:1.300px;text-underline-offset:1.200px">AR008203959</div><div class="t lbl" style="left:219.89999999999998px;top:10.16px;font-size:9.5px;letter-spacing:0.29px">Lot batch</div><div class="t val" style="left:219.89999999999998px;top:27.91px;font-size:10.5px;letter-spacing:0.57px">5609818-01/1502</div><div class="t lbl" style="left:426.20000000000005px;top:10.16px;font-size:9.5px;letter-spacing:0.31px">Material</div><div class="t val" style="left:426.20000000000005px;top:27.91px;font-size:10.5px;letter-spacing:-0.52px">ABS</div><div class="t lbl" style="left:632.5px;top:10.16px;font-size:9.5px;letter-spacing:0.34px">Configuration</div><div class="t val" style="left:632.5px;top:27.91px;font-size:10.5px;letter-spacing:-0.26px">SUPERSACK</div><div class="t lbl" style="left:838.7px;top:10.16px;font-size:9.5px;letter-spacing:0.12px">Item Desc.</div><div class="t val" style="left:838.7px;top:27.91px;font-size:10.5px;letter-spacing:0.16px">ABS AG100H</div><div class="t lbl" style="left:1045px;top:10.16px;font-size:9.5px;letter-spacing:0.25px">Weight</div><div class="t val" style="left:1045px;top:27.91px;font-size:10.5px;letter-spacing:0.2px">1,984.14 LBS</div><div class="t lbl" style="left:1251.3px;top:10.16px;font-size:9.5px;letter-spacing:0.245px">Arrival date</div><div class="t val" style="left:1251.3px;top:27.91px;font-size:10.5px;letter-spacing:0.74px">12/10/2023</div><div class="t lbl" style="left:1457.5px;top:10.16px;font-size:9.5px;letter-spacing:0.28px">Dwell time</div><div class="t val" style="left:1457.5px;top:27.91px;font-size:10.5px;letter-spacing:0.34px">86 Days</div><svg class="abs" style="left:1658px;top:19.500px" width="7" height="11" viewBox="0 0 7 11" fill="none" stroke="#cfcfcf" stroke-width="1"><path d="M1 .7 5.800 5.500 1 10.300"/></svg></div>
<div class="card" style="left:213px;top:756.70px;width:1677px;height:50px;border-radius:5px"><div class="t lbl" style="left:13.699999999999989px;top:10.16px;font-size:9.5px;letter-spacing:0.09px">Reference ID</div><div class="t val teal" style="left:13.699999999999989px;top:27.91px;font-size:10.5px;letter-spacing:0.43px;text-decoration:underline;text-decoration-thickness:1.300px;text-underline-offset:1.200px">AR008203956</div><div class="t lbl" style="left:219.89999999999998px;top:10.16px;font-size:9.5px;letter-spacing:0.29px">Lot batch</div><div class="t val" style="left:219.89999999999998px;top:27.91px;font-size:10.5px;letter-spacing:0.57px">5609818-01/1502</div><div class="t lbl" style="left:426.20000000000005px;top:10.16px;font-size:9.5px;letter-spacing:0.31px">Material</div><div class="t val" style="left:426.20000000000005px;top:27.91px;font-size:10.5px;letter-spacing:-0.52px">ABS</div><div class="t lbl" style="left:632.5px;top:10.16px;font-size:9.5px;letter-spacing:0.34px">Configuration</div><div class="t val" style="left:632.5px;top:27.91px;font-size:10.5px;letter-spacing:-0.26px">SUPERSACK</div><div class="t lbl" style="left:838.7px;top:10.16px;font-size:9.5px;letter-spacing:0.12px">Item Desc.</div><div class="t val" style="left:838.7px;top:27.91px;font-size:10.5px;letter-spacing:0.16px">ABS AG100H</div><div class="t lbl" style="left:1045px;top:10.16px;font-size:9.5px;letter-spacing:0.25px">Weight</div><div class="t val" style="left:1045px;top:27.91px;font-size:10.5px;letter-spacing:0.2px">1,984.14 LBS</div><div class="t lbl" style="left:1251.3px;top:10.16px;font-size:9.5px;letter-spacing:0.245px">Arrival date</div><div class="t val" style="left:1251.3px;top:27.91px;font-size:10.5px;letter-spacing:0.74px">12/10/2023</div><div class="t lbl" style="left:1457.5px;top:10.16px;font-size:9.5px;letter-spacing:0.28px">Dwell time</div><div class="t val" style="left:1457.5px;top:27.91px;font-size:10.5px;letter-spacing:0.34px">86 Days</div><svg class="abs" style="left:1658px;top:19.500px" width="7" height="11" viewBox="0 0 7 11" fill="none" stroke="#cfcfcf" stroke-width="1"><path d="M1 .7 5.800 5.500 1 10.300"/></svg></div>
<div class="card" style="left:213px;top:816.30px;width:1677px;height:50px;border-radius:5px"><div class="t lbl" style="left:13.699999999999989px;top:10.16px;font-size:9.5px;letter-spacing:0.09px">Reference ID</div><div class="t val teal" style="left:13.699999999999989px;top:27.91px;font-size:10.5px;letter-spacing:0.43px;text-decoration:underline;text-decoration-thickness:1.300px;text-underline-offset:1.200px">AR008203960</div><div class="t lbl" style="left:219.89999999999998px;top:10.16px;font-size:9.5px;letter-spacing:0.29px">Lot batch</div><div class="t val" style="left:219.89999999999998px;top:27.91px;font-size:10.5px;letter-spacing:0.57px">5609818-01/1502</div><div class="t lbl" style="left:426.20000000000005px;top:10.16px;font-size:9.5px;letter-spacing:0.31px">Material</div><div class="t val" style="left:426.20000000000005px;top:27.91px;font-size:10.5px;letter-spacing:-0.52px">ABS</div><div class="t lbl" style="left:632.5px;top:10.16px;font-size:9.5px;letter-spacing:0.34px">Configuration</div><div class="t val" style="left:632.5px;top:27.91px;font-size:10.5px;letter-spacing:-0.26px">SUPERSACK</div><div class="t lbl" style="left:838.7px;top:10.16px;font-size:9.5px;letter-spacing:0.12px">Item Desc.</div><div class="t val" style="left:838.7px;top:27.91px;font-size:10.5px;letter-spacing:0.16px">ABS AG100H</div><div class="t lbl" style="left:1045px;top:10.16px;font-size:9.5px;letter-spacing:0.25px">Weight</div><div class="t val" style="left:1045px;top:27.91px;font-size:10.5px;letter-spacing:0.2px">1,984.14 LBS</div><div class="t lbl" style="left:1251.3px;top:10.16px;font-size:9.5px;letter-spacing:0.245px">Arrival date</div><div class="t val" style="left:1251.3px;top:27.91px;font-size:10.5px;letter-spacing:0.74px">12/10/2023</div><div class="t lbl" style="left:1457.5px;top:10.16px;font-size:9.5px;letter-spacing:0.28px">Dwell time</div><div class="t val" style="left:1457.5px;top:27.91px;font-size:10.5px;letter-spacing:0.34px">86 Days</div><svg class="abs" style="left:1658px;top:19.500px" width="7" height="11" viewBox="0 0 7 11" fill="none" stroke="#cfcfcf" stroke-width="1"><path d="M1 .7 5.800 5.500 1 10.300"/></svg></div>
<div class="card" style="left:213px;top:875.90px;width:1677px;height:50px;border-radius:5px"><div class="t lbl" style="left:13.699999999999989px;top:10.16px;font-size:9.5px;letter-spacing:0.09px">Reference ID</div><div class="t val teal" style="left:13.699999999999989px;top:27.91px;font-size:10.5px;letter-spacing:0.43px;text-decoration:underline;text-decoration-thickness:1.300px;text-underline-offset:1.200px">AR008203961</div><div class="t lbl" style="left:219.89999999999998px;top:10.16px;font-size:9.5px;letter-spacing:0.29px">Lot batch</div><div class="t val" style="left:219.89999999999998px;top:27.91px;font-size:10.5px;letter-spacing:0.57px">5609818-01/1502</div><div class="t lbl" style="left:426.20000000000005px;top:10.16px;font-size:9.5px;letter-spacing:0.31px">Material</div><div class="t val" style="left:426.20000000000005px;top:27.91px;font-size:10.5px;letter-spacing:-0.52px">ABS</div><div class="t lbl" style="left:632.5px;top:10.16px;font-size:9.5px;letter-spacing:0.34px">Configuration</div><div class="t val" style="left:632.5px;top:27.91px;font-size:10.5px;letter-spacing:-0.26px">SUPERSACK</div><div class="t lbl" style="left:838.7px;top:10.16px;font-size:9.5px;letter-spacing:0.12px">Item Desc.</div><div class="t val" style="left:838.7px;top:27.91px;font-size:10.5px;letter-spacing:0.16px">ABS AG100H</div><div class="t lbl" style="left:1045px;top:10.16px;font-size:9.5px;letter-spacing:0.25px">Weight</div><div class="t val" style="left:1045px;top:27.91px;font-size:10.5px;letter-spacing:0.2px">1,984.14 LBS</div><div class="t lbl" style="left:1251.3px;top:10.16px;font-size:9.5px;letter-spacing:0.245px">Arrival date</div><div class="t val" style="left:1251.3px;top:27.91px;font-size:10.5px;letter-spacing:0.74px">12/10/2023</div><div class="t lbl" style="left:1457.5px;top:10.16px;font-size:9.5px;letter-spacing:0.28px">Dwell time</div><div class="t val" style="left:1457.5px;top:27.91px;font-size:10.5px;letter-spacing:0.34px">86 Days</div><svg class="abs" style="left:1658px;top:19.500px" width="7" height="11" viewBox="0 0 7 11" fill="none" stroke="#cfcfcf" stroke-width="1"><path d="M1 .7 5.800 5.500 1 10.300"/></svg></div>
</body></html>
